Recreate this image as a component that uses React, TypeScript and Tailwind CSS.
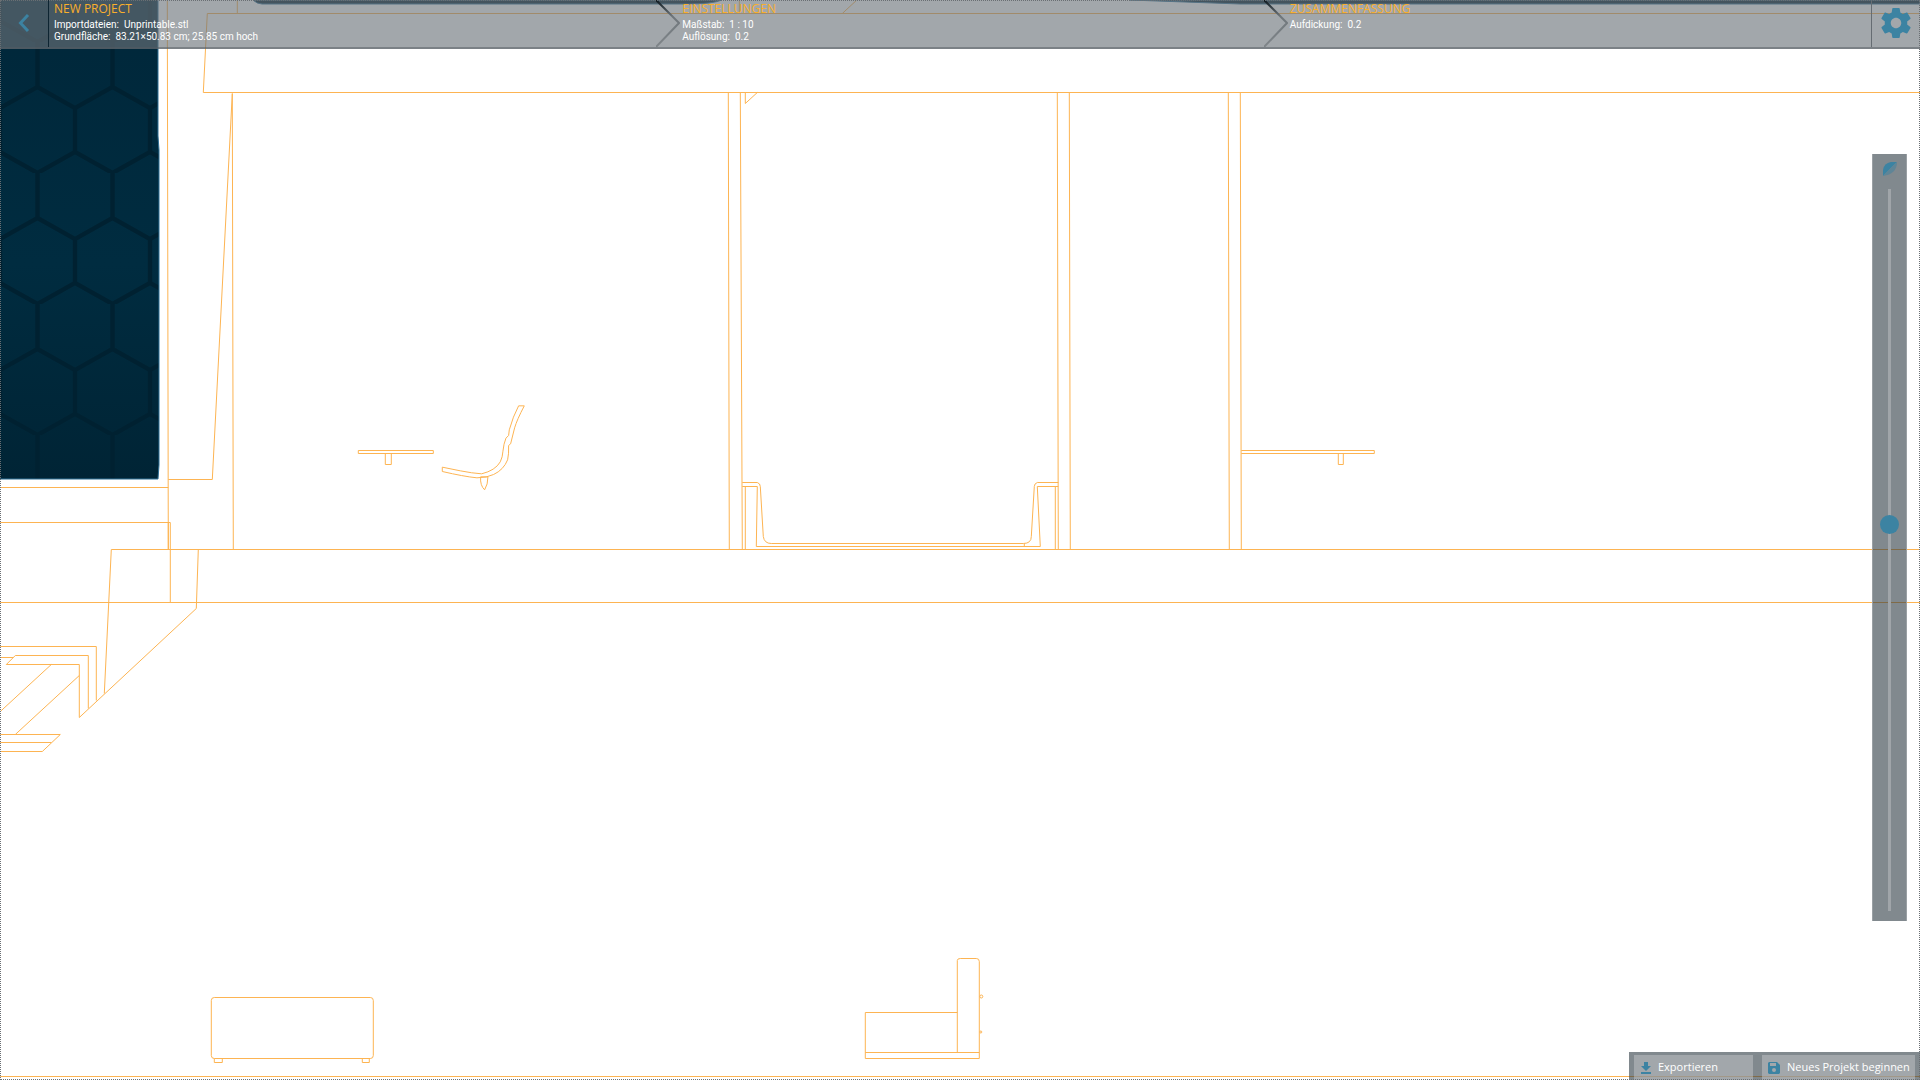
import { useState } from 'react';

function Drawing() {
  return (
    <svg
      className="absolute inset-0 h-full w-full"
      viewBox="0 0 1920 1080"
      preserveAspectRatio="xMinYMin slice"
      fill="none"
      aria-hidden="true"
    >
      <defs>
        <pattern id="hex" x="0" y="42" width="75" height="131" patternUnits="userSpaceOnUse">
          <path
            d="M37.5 -2V45L0 66V110L37.5 131L75 110V66L37.5 45M37.5 129V133"
            stroke="#002131"
            strokeWidth="4.5"
          />
        </pattern>
        <linearGradient id="sea" x1="0" y1="0" x2="0" y2="1">
          <stop offset="0" stopColor="#00273a" />
          <stop offset="0.55" stopColor="#002c40" />
          <stop offset="1" stopColor="#002435" />
        </linearGradient>
      </defs>

      <path d="M0 0H158V136L159 150V465L158 479H0Z" fill="url(#sea)" />
      <path d="M0 0H158V136L159 150V465L158 479H0Z" fill="url(#hex)" />
      <path d="M158 0V136L159 150V465L158 479H0" stroke="#2f7096" strokeWidth="1" />
      <path d="M253 0Q257 4 262 4H690Q712 4 722 0Z" fill="#00202f" stroke="#2f7096" />
      <path d="M1130 0L1240 4H1920V0Z" fill="#00202f" stroke="#2f7096" />

      <g transform="translate(0.3 0.5)" stroke="#fdb452" strokeWidth="1">
        <path d="M1920 13H207L203 92H1920M237 0V13M739 0V13M842 13L856 0" />
        <path d="M167 0L168 549M168 479H212L232 93L233 549" />
        <path d="M0 487H168M0 522H170V602M168 522V549" />
        <path d="M1920 549H111L104 693M198 549L196 608L79 717V664H6L15 655H88V708" />
        <path d="M0 602H1920M0 646H96V700M0 657H13" />
        <path d="M51 664L0 711M79 675L15 734M0 734H60L42 751H0M0 742H51" />
        <path d="M728 92L729 549M740 92L742 549M1057 92L1058 549M1069 92L1070 549M1228 92L1229 549M1240 92L1241 549" />
        <path d="M745 92V103L757 92" />
        <path d="M742 482H757Q760 483 760 486L763 536Q764 543 771 543H1023Q1031 543 1031 536L1034 486Q1034 483 1037 482H1058" />
        <path d="M742 486H757L756 546H1040L1037 486H1058M745 486V549M1055 486V549M1024 543V546" />
        <path d="M358 450H433V453H358ZM385 453V464H391V453" />
        <path d="M1241 450H1374V453H1241M1338 453V464H1343V453" />
        <path
          transform="translate(340 390) scale(0.3333)"
          strokeWidth="3"
          d="M306 230L360 241Q395 248 424 250Q465 240 480 214Q487 200 488 182Q490 160 497 143L505 135L507 118Q518 78 535 46H552Q530 88 523 112L511 160L505 165Q506 190 502 208Q490 238 460 252Q440 262 410 262Q370 258 306 243ZM421 259Q419 285 433 298Q443 282 443 259Z"
        />
        <rect x="211" y="997" width="162" height="61" rx="3" />
        <path d="M214 1058V1062H222V1058M362 1058V1062H369V1058" />
        <path d="M957 1052V960Q957 958 960 958H976Q979 958 979 961V1058H865V1012H957M865 1052H979" />
        <circle cx="981" cy="996" r="1.5" />
        <circle cx="980.5" cy="1031.5" r="1" />
        <path d="M0 1076H1920" />
      </g>
    </svg>
  );
}

function Chevron({ id }: { id: string }) {
  return (
    <svg className="-mr-[3px] h-[47px] w-6 shrink-0" viewBox="0 0 24 47" fill="none" aria-hidden="true">
      <defs>
        <linearGradient id={id} x1="0" y1="0" x2="0" y2="47" gradientUnits="userSpaceOnUse">
          <stop offset="0" stopColor="#0b161d" />
          <stop offset="0.35" stopColor="#6f767b" />
          <stop offset="1" stopColor="#80868a" />
        </linearGradient>
      </defs>
      <path d="M0 0L23 23L0 47" stroke={`url(#${id})`} strokeWidth="2" />
    </svg>
  );
}

function Step({ title, lines }: { title: string; lines: string[] }) {
  return (
    <div className="pt-px pl-[5px] whitespace-pre">
      <h2 className="mb-[2px] text-xs leading-4 text-[#f9af2c]">{title}</h2>
      {lines.map((line) => (
        <p key={line} className="font-['Roboto','Noto_Sans',sans-serif] text-[10px] leading-3 text-white">
          {line}
        </p>
      ))}
    </div>
  );
}

export default function App() {
  const [layer, setLayer] = useState(464);

  return (
    <div className="relative flex min-h-screen flex-col overflow-hidden bg-white font-['Open_Sans','Noto_Sans',sans-serif]">
      <Drawing />

      <header className="relative flex h-[49px] border-b-2 border-[#545b62]/50 bg-[#6c747a]/63">
        <button aria-label="Zurück" className="flex w-[49px] items-center justify-center border-r border-[#0d2431] pb-[2px]">
          <svg className="h-[18px] w-3" viewBox="0 0 12 18" fill="none" aria-hidden="true">
            <path d="M10 1L2.5 9L10 17" stroke="#3c83a2" strokeWidth="3" />
          </svg>
        </button>
        <section className="flex w-0 grow">
          <Step
            title="NEW PROJECT"
            lines={['Importdateien:  Unprintable.stl', 'Grundfläche:  83.21×50.83 cm; 25.85 cm hoch']}
          />
        </section>
        <section className="flex w-0 grow">
          <Chevron id="fade-settings" />
          <Step title="EINSTELLUNGEN" lines={['Maßstab:  1 : 10', 'Auflösung:  0.2']} />
        </section>
        <section className="flex w-0 grow">
          <Chevron id="fade-summary" />
          <Step title="ZUSAMMENFASSUNG" lines={['Aufdickung:  0.2']} />
        </section>
        <button aria-label="Optionen" className="flex w-[49px] items-center justify-center border-l border-[#656c72] pb-[2px]">
          <svg className="size-9" viewBox="0 0 24 24" fill="#3c83a2" aria-hidden="true">
            <path d="M19.43 12.98c.04-.32.07-.64.07-.98s-.03-.66-.07-.98l2.11-1.65c.19-.15.24-.42.12-.64l-2-3.46c-.12-.22-.39-.3-.61-.22l-2.49 1c-.52-.4-1.08-.73-1.69-.98l-.38-2.65C14.46 2.18 14.25 2 14 2h-4c-.25 0-.46.18-.49.42l-.38 2.65c-.61.25-1.17.59-1.69.98l-2.49-1c-.23-.09-.49 0-.61.22l-2 3.46c-.13.22-.07.49.12.64l2.11 1.65c-.04.32-.07.65-.07.98s.03.66.07.98l-2.11 1.65c-.19.15-.24.42-.12.64l2 3.46c.12.22.39.3.61.22l2.49-1c.52.4 1.08.73 1.69.98l.38 2.65c.03.24.24.42.49.42h4c.25 0 .46-.18.49-.42l.38-2.65c.61-.25 1.17-.59 1.69-.98l2.49 1c.23.09.49 0 .61-.22l2-3.46c.12-.22.07-.49-.12-.64l-2.11-1.65zM12 15.5c-1.93 0-3.5-1.57-3.5-3.5s1.57-3.5 3.5-3.5 3.5 1.57 3.5 3.5-1.57 3.5-3.5 3.5z" />
          </svg>
        </button>
      </header>

      <main className="relative flex flex-1 flex-col items-end pt-[105px] pr-[13px] pb-[131px]">
        <div className="flex w-[35px] flex-1 flex-col items-center gap-3 border-x border-[#9aa0a4] bg-[#2d3a43]/60 pt-2 pb-[10px]">
          <svg className="size-[15px] shrink-0" viewBox="0 0 15 15" aria-hidden="true">
            <path d="M1 14V8Q2 1 9 0H15Z" fill="#3c83a2" />
            <path d="M15 0Q15 12 1 14Z" fill="#5f8597" />
          </svg>
          <input
            type="range"
            aria-label="Ebene"
            min={0}
            max={1000}
            value={layer}
            onChange={(e) => setLayer(Number(e.target.value))}
            className="w-[19px] flex-1 appearance-none bg-[linear-gradient(#a0a5a9,#a0a5a9)] bg-[length:3px_100%] bg-center bg-no-repeat [writing-mode:vertical-lr] [&::-webkit-slider-thumb]:size-[19px] [&::-webkit-slider-thumb]:appearance-none [&::-webkit-slider-thumb]:rounded-full [&::-webkit-slider-thumb]:bg-[#3c83a2]"
          />
        </div>
      </main>

      <footer className="relative flex h-7 gap-[9px] self-end bg-[#2d3a43]/60 px-[5px] pt-[3px] text-[11px] text-white">
        <button className="flex w-[119px] items-center gap-[7px] bg-[#c4c6c8]/50 pl-[7px]">
          <svg className="h-3 w-[10px]" viewBox="0 0 10 12" fill="#3c83a2" aria-hidden="true">
            <path d="M3 0H7V4H10L5 9L0 4H3ZM0 10H10V12H0Z" />
          </svg>
          Exportieren
        </button>
        <button className="flex w-[153px] items-center gap-[7px] bg-[#c4c6c8]/50 pl-[6px] whitespace-nowrap">
          <svg className="size-3 shrink-0" viewBox="0 0 12 12" aria-hidden="true">
            <path
              d="M1 0H9L12 3V11L11 12H1L0 11V1ZM2 1V4H8V1ZM6 6A2 2 0 1 0 6 10A2 2 0 1 0 6 6Z"
              fill="#3c83a2"
              fillRule="evenodd"
            />
          </svg>
          Neues Projekt beginnen
        </button>
      </footer>

      <div className="pointer-events-none absolute inset-0 border border-dotted border-[#6a6f73]" />
    </div>
  );
}
